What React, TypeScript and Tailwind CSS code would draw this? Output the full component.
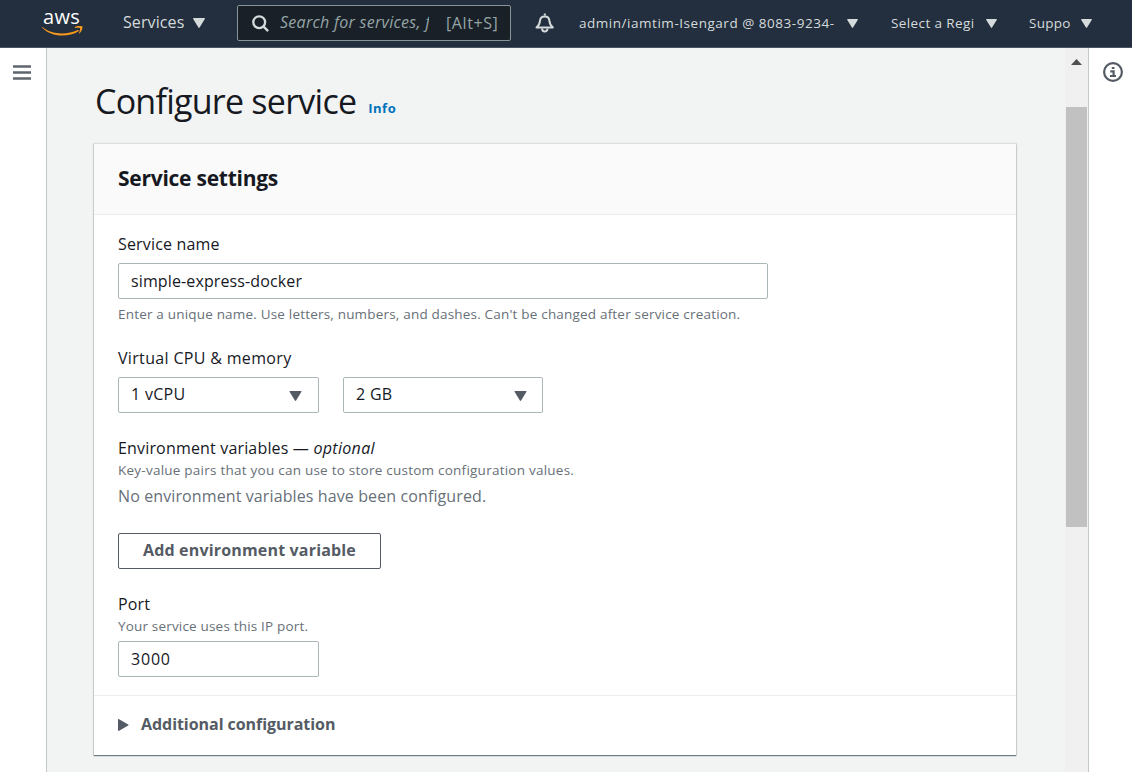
import React from "react";

function Caret({ className }: { className: string }) {
  return (
    <svg viewBox="0 0 12 10" className={`shrink-0 ${className}`} fill="currentColor">
      <path d="M.7 0h10.6c.6 0 .9.6.5 1.1L6.6 9.5c-.3.5-.9.5-1.2 0L.2 1.1C-.2.6.1 0 .7 0z" />
    </svg>
  );
}

function AwsLogo() {
  return (
    <div className="flex h-[27px] w-[41px] flex-col items-center">
      <div className="mr-[2px] h-[17px] text-[20px] leading-[15px] font-medium tracking-[0.3px] text-white">aws</div>
      <svg viewBox="0 0 41 10" className="h-[10px] w-[41px] shrink-0" fill="#f7981f">
        <path d="M.3 1.1C5.5 5.5 12 7.5 20 7.5c5.5 0 11-1.3 15.700-3.500.9-.4 1.500.5.8 1.200C32.200 8.100 26 9.600 20 9.600 12.200 9.600 5.400 7 .2 1.800c-.4-.4-.2-.9.1-.7z" />
        <path d="M33 .9c2-1 6-1.400 7.200-.6.9.7-.3 5.200-2.600 7-.5.4-.9.100-.7-.4.700-1.500 1.500-4 1.100-4.700-.4-.6-3.100-.5-4.800-.3-.5.100-.7-.6-.2-1z" />
      </svg>
    </div>
  );
}

function TopBar() {
  return (
    <header className="flex h-12 shrink-0 items-start border-b border-[#4a5361] bg-[#232f3e] text-[#d5dbdb]">
      <div className="ml-[42px] mt-[9px]">
        <AwsLogo />
      </div>
      <div className="ml-[40px] flex h-[44px] w-[82px] items-center justify-between text-[16px] tracking-[0.1px]">
        <span>Services</span>
        <Caret className="relative top-px h-[10px] w-[12px]" />
      </div>
      <div className="ml-[32px] mt-[5px] flex h-9 w-[274px] items-center rounded-[2px] border border-[#879596] bg-[#1a2028] text-[#95a5a6]">
        <svg viewBox="0 0 17 17" className="ml-[14px] h-[17px] w-[17px] shrink-0 text-[#d5dbdb]" fill="none" stroke="currentColor" strokeWidth="2.3">
          <circle cx="7.2" cy="7.2" r="5.9" />
          <path d="M11.400 11.400l4.700 4.700" />
        </svg>
        <div className="relative -top-px ml-[11px] w-[149px] overflow-hidden whitespace-nowrap text-[16px] italic tracking-[0.28px]">
          Search for services, f
        </div>
        <span className="ml-[17px] text-[16px] tracking-[0.6px]">[Alt+S]</span>
      </div>
      <svg viewBox="0 0 20 20" className="ml-[24px] mt-[13px] h-5 w-5 shrink-0" fill="none" stroke="currentColor" strokeWidth="2">
        <path d="M9.800 0.500v2" />
        <path d="M1.500 14.500c2.500-2 3.300-3.900 3.500-6.700C5.200 5 7 3.400 9.800 3.400s4.400 1.600 4.600 4.400c.2 2.800 1 4.700 3.500 6.700z" strokeLinejoin="round" />
        <path d="M7.100 15.500c0 4 5.400 4 5.400 0" />
      </svg>
      <div className="ml-[24px] flex h-[46px] items-center text-[13.5px]">
        <div className="flex w-[279px] items-center justify-between">
          <span className="whitespace-nowrap tracking-[0.53px]">admin/iamtim-Isengard @ 8083-9234-</span>
          <Caret className="h-[9px] w-[11px]" />
        </div>
        <div className="ml-[33px] flex w-[106px] items-center justify-between">
          <span className="whitespace-nowrap tracking-[0.4px]">Select a Regi</span>
          <Caret className="h-[9px] w-[11px]" />
        </div>
        <div className="ml-[32px] flex w-[63px] items-center justify-between">
          <span className="tracking-[0.25px]">Suppo</span>
          <Caret className="h-[9px] w-[11px]" />
        </div>
      </div>
    </header>
  );
}

function Label({ children }: { children: React.ReactNode }) {
  return <div className="h-[22px] whitespace-nowrap text-[16px] leading-[22px] tracking-[0.17px]">{children}</div>;
}

function Hint({ children }: { children: React.ReactNode }) {
  return <div className="h-[18px] whitespace-nowrap text-[13.5px] leading-[18px] text-[#687078]">{children}</div>;
}

function Select({ value, className }: { value: string; className: string }) {
  return (
    <div className={`flex h-9 items-center justify-between rounded-[2px] border border-[#aab7b8] bg-white pl-[12px] ${className}`}>
      <span className="relative -top-px tracking-[0.3px]">{value}</span>
      <Caret className="relative top-px h-[10px] w-[13px] text-[#545b64]" />
    </div>
  );
}

function SettingsCard() {
  return (
    <section className="mt-[18px] h-[611px] w-[922px] bg-white shadow-[0_1px_1px_0_rgba(0,28,36,0.5),0_0_1px_1px_rgba(0,28,36,0.1)]">
      <div className="flex h-[71px] items-center border-b border-[#eaeded] bg-[#fafafa] pl-6">
        <h2 className="relative -top-px text-[21px] leading-[28px] font-bold tracking-[-0.257px]">Service settings</h2>
      </div>
      <div className="flex h-[481px] flex-col items-start border-b border-[#eaeded] pl-6 pt-[18px] text-[16px]">
        <Label>Service name</Label>
        <div className="mt-[8px] flex h-9 w-[650px] items-center rounded-[2px] border border-[#aab7b8] pl-[12px] tracking-[0.12px]">
          simple-express-docker
        </div>
        <div className="mt-[6px] tracking-[0.19px]">
          <Hint>Enter a unique name. Use letters, numbers, and dashes. Can't be changed after service creation.</Hint>
        </div>
        <div className="mt-[24px] h-[22px] leading-[22px] tracking-[0.333px]">Virtual CPU &amp; memory</div>
        <div className="mt-[8px] flex gap-6">
          <Select value="1 vCPU" className="w-[201px] pr-[16px]" />
          <Select value="2 GB" className="w-[200px] pr-[15px]" />
        </div>
        <div className="mt-[24px]">
          <Label>
            Environment variables — <i className="tracking-[0.328px]">optional</i>
          </Label>
        </div>
        <div className="mt-[2px] tracking-[0.24px]">
          <Hint>Key-value pairs that you can use to store custom configuration values.</Hint>
        </div>
        <div className="mt-[6px] h-[22px] leading-[22px] tracking-[0.11px] text-[#687078]">
          No environment variables have been configured.
        </div>
        <button className="mt-[26px] flex h-9 w-[263px] items-center justify-center rounded-[2px] border border-[#545b64] font-bold tracking-[0.171px] text-[#545b64]">
          <span className="relative -top-px">Add environment variable</span>
        </button>
        <div className="mt-[24px]">
          <Label>Port</Label>
        </div>
        <div className="mt-[2px] tracking-[0.18px]">
          <Hint>Your service uses this IP port.</Hint>
        </div>
        <div className="mt-[6px] flex h-9 w-[201px] items-center rounded-[2px] border border-[#aab7b8] pl-[12px] tracking-[0.8px]">
          3000
        </div>
      </div>
      <div className="flex h-[56px] items-center pl-6 text-[16px] font-bold text-[#545b64]">
        <svg viewBox="0 0 11 12" className="relative top-px h-[12px] w-[11px]" fill="currentColor">
          <path d="M0 .7v10.600c0 .6.600.9 1.100.500l9.100-5.200c.5-.3.500-.9 0-1.200L1.100.2C.6-.2 0 .1 0 .7z" />
        </svg>
        <span className="ml-[12px] tracking-[-0.05px]">Additional configuration</span>
      </div>
    </section>
  );
}

export default function App() {
  return (
    <div className="flex h-[772px] w-[1132px] flex-col overflow-hidden bg-[#f2f3f3] font-['Open_Sans','Noto_Sans',sans-serif] text-[#16191f]">
      <TopBar />
      <div className="flex min-h-0 flex-1">
        <nav className="w-[47px] shrink-0 border-r border-[#c3c8c9] bg-white">
          <svg viewBox="0 0 18 15" className="ml-[13px] mt-[17px] h-[15px] w-[18px]" fill="#5f666e">
            <path d="M0 .2h18v2.500H0zM0 6.200h18v2.500H0zM0 12.200h18v2.500H0z" />
          </svg>
        </nav>
        <main className="min-w-0 flex-1 pl-[48px] pt-[30px]">
          <div className="flex h-[48px] items-baseline">
            <h1 className="text-[34px] leading-[47px] tracking-[-0.75px]">Configure service</h1>
            <a className="relative -top-px ml-[12px] text-[13px] font-bold tracking-[0.5px] text-[#0073bb]">Info</a>
          </div>
          <div className="-ml-px">
            <SettingsCard />
          </div>
        </main>
        <div className="flex w-[24px] shrink-0 flex-col items-center border-r border-[#c3c8c9] bg-[#f0f0f0]">
          <svg viewBox="0 0 11 6" className="mt-[11px] h-[6px] w-[11px]" fill="#505050">
            <path d="M5.500 0L11 6H0z" />
          </svg>
          <div className="mt-[42px] h-[420px] w-[21px] bg-[#c1c1c1]" />
        </div>
        <aside className="w-[43px] shrink-0 bg-white">
          <svg viewBox="0 0 20 20" className="ml-[14px] mt-[14px] h-5 w-5" fill="none" stroke="#545b64">
            <circle cx="10" cy="10" r="8.900" strokeWidth="2.200" />
            <path d="M8.800 6h2.700M7.300 9.300h3.300v4.700M7 14h6" strokeWidth="2.200" />
          </svg>
        </aside>
      </div>
    </div>
  );
}
